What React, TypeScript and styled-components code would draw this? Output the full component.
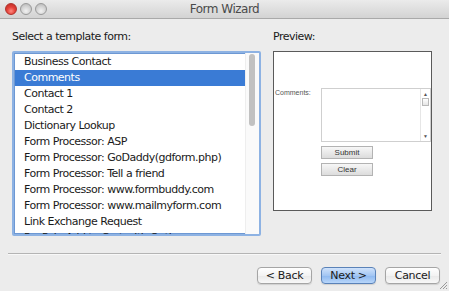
import React from "react";
import styled, { createGlobalStyle } from "styled-components";

const Global = createGlobalStyle`
  html, body { margin: 0; padding: 0; background: #ececec; }
  * { box-sizing: border-box; }
`;

const Window = styled.div`
  width: 449px;
  height: 291px;
  background: #ececec;
  display: flex;
  flex-direction: column;
  font-family: "DejaVu Sans", "Liberation Sans", sans-serif;
  color: #1a1a1a;
  position: relative;
  overflow: hidden;
`;

const TitleBar = styled.div`
  height: 19px;
  flex: none;
  display: flex;
  align-items: center;
  position: relative;
  background: linear-gradient(#ebebeb, #d3d3d3);
  border-bottom: 1px solid #a9a9a9;
  padding-left: 5px;
  gap: 3px;
`;

const Light = styled.div<{ $c: "red" | "gray" }>`
  width: 12px;
  height: 12px;
  border-radius: 50%;
  border: 1px solid ${(p) => (p.$c === "red" ? "#b0322c" : "#9a9a9a")};
  background: ${(p) =>
    p.$c === "red"
      ? "radial-gradient(circle at 50% 70%, #ff8a80 0%, #e5423a 45%, #b82a22 100%)"
      : "radial-gradient(circle at 50% 70%, #f2f2f2 0%, #d4d4d4 50%, #b2b2b2 100%)"};
`;

const Title = styled.div`
  position: absolute;
  left: 0;
  right: 0;
  top: 0;
  bottom: 0;
  display: flex;
  align-items: center;
  justify-content: center;
  font-size: 12px;
  letter-spacing: -0.5px;
  color: #4a4a4a;
  pointer-events: none;
`;

const Body = styled.div`
  display: flex;
  gap: 12px;
  padding: 11px 0 0 12px;
`;

const Column = styled.div<{ $w: number }>`
  width: ${(p) => p.$w}px;
  display: flex;
  flex-direction: column;
`;

const Label = styled.div`
  font-size: 11px;
  letter-spacing: -0.5px;
  line-height: 14px;
  height: 21px;
  color: #1a1a1a;
`;

const ListBox = styled.div`
  height: 185px;
  border: 2px solid #8db2e3;
  border-radius: 2px;
  display: flex;
  background: #fff;
  overflow: hidden;
  box-shadow: inset 0 0 0 1px #6d98d3;
`;

const Items = styled.div`
  flex: 1;
  padding: 1px 0 0 1px;
  display: flex;
  flex-direction: column;
  overflow: hidden;
`;

const Item = styled.div<{ $sel?: boolean }>`
  height: 16px;
  flex: none;
  padding-left: 9px;
  font-size: 11px;
  letter-spacing: -0.5px;
  line-height: 16px;
  white-space: nowrap;
  background: ${(p) => (p.$sel ? "#3a7bd5" : "transparent")};
  color: ${(p) => (p.$sel ? "#fff" : "#1a1a1a")};
`;

const ScrollTrack = styled.div`
  width: 14px;
  flex: none;
  padding: 1px 4px 0 3px;
  background: #fafafa;
  border-left: 1px solid #eeeeee;
`;

const Thumb = styled.div`
  height: 72px;
  border-radius: 4px;
  background: #c1c1c1;
`;

const PreviewBox = styled.div`
  height: 160px;
  border: 1px solid #5a5a5a;
  background: #fff;
  display: flex;
  padding: 36px 0 0 1px;
  font-family: "Liberation Sans", Arial, sans-serif;
`;

const FieldLabel = styled.div`
  width: 46px;
  font-size: 7px;
  color: #555;
  padding-top: 1px;
`;

const FieldCol = styled.div`
  display: flex;
  flex-direction: column;
  gap: 4px;
  width: 110px;
`;

const TextArea = styled.div`
  height: 54px;
  border: 1px solid #cfcfcf;
  display: flex;
  justify-content: flex-end;
`;

const MiniScroll = styled.div`
  width: 10px;
  border-left: 1px solid #e6e6e6;
  display: flex;
  flex-direction: column;
  align-items: center;
  padding: 2px 0;
  font-size: 5px;
  color: #555;
  gap: 1px;
`;

const MiniThumb = styled.div`
  width: 7px;
  height: 8px;
  border: 1px solid #b9b9b9;
  background: linear-gradient(#ffffff, #e5e5e5);
`;

const Spacer = styled.div`
  flex: 1;
`;

const FormButton = styled.div`
  width: 52px;
  height: 13px;
  border: 1px solid #b3b3b3;
  background: linear-gradient(#f7f7f7, #dcdcdc);
  font-size: 8px;
  color: #333;
  display: flex;
  align-items: center;
  justify-content: center;
`;

const Separator = styled.div`
  margin: 17px 8px 0 8px;
  height: 2px;
  border-top: 1px solid #b4b4b4;
  border-bottom: 1px solid #f8f8f8;
`;

const ButtonRow = styled.div`
  display: flex;
  justify-content: flex-end;
  gap: 9px;
  padding: 12px 9px 0 0;
`;

const Button = styled.div<{ $primary?: boolean }>`
  width: 55px;
  height: 17px;
  border-radius: 4px;
  border: 1px solid ${(p) => (p.$primary ? "#5a82b8" : "#a5a5a5")};
  background: ${(p) =>
    p.$primary
      ? "linear-gradient(#cfe2fb 0%, #a3c6f3 50%, #8db8f0 51%, #b8d6fa 100%)"
      : "linear-gradient(#ffffff 0%, #f3f3f3 50%, #e9e9e9 51%, #f8f8f8 100%)"};
  box-shadow: 0 1px 1px rgba(0, 0, 0, 0.12);
  font-size: 11px;
  letter-spacing: -0.3px;
  color: #1a1a1a;
  display: flex;
  align-items: center;
  justify-content: center;
`;

const Grip = styled.svg`
  position: absolute;
  right: 1px;
  bottom: 1px;
`;

const items = [
  "Business Contact",
  "Comments",
  "Contact 1",
  "Contact 2",
  "Dictionary Lookup",
  "Form Processor: ASP",
  "Form Processor: GoDaddy(gdform.php)",
  "Form Processor: Tell a friend",
  "Form Processor: www.formbuddy.com",
  "Form Processor: www.mailmyform.com",
  "Link Exchange Request",
  "PayPal - Add to Cart with Option",
];

export default function App() {
  return (
    <Window>
      <Global />
      <TitleBar>
        <Light $c="red" />
        <Light $c="gray" />
        <Light $c="gray" />
        <Title>Form Wizard</Title>
      </TitleBar>
      <Body>
        <Column $w={249}>
          <Label>Select a template form:</Label>
          <ListBox>
            <Items>
              {items.map((t, i) => (
                <Item key={t} $sel={i === 1}>
                  {t}
                </Item>
              ))}
            </Items>
            <ScrollTrack>
              <Thumb />
            </ScrollTrack>
          </ListBox>
        </Column>
        <Column $w={159}>
          <Label>Preview:</Label>
          <PreviewBox>
            <FieldLabel>Comments:</FieldLabel>
            <FieldCol>
              <TextArea>
                <MiniScroll>
                  <span>▲</span>
                  <MiniThumb />
                  <Spacer />
                  <span>▼</span>
                </MiniScroll>
              </TextArea>
              <FormButton>Submit</FormButton>
              <FormButton>Clear</FormButton>
            </FieldCol>
          </PreviewBox>
        </Column>
      </Body>
      <Separator />
      <ButtonRow>
        <Button>&lt; Back</Button>
        <Button $primary>Next &gt;</Button>
        <Button>Cancel</Button>
      </ButtonRow>
      <Grip width="10" height="10" viewBox="0 0 10 10">
        <path d="M9 2 L2 9 M9 5 L5 9 M9 8 L8 9" stroke="#9a9a9a" strokeWidth="1" />
      </Grip>
    </Window>
  );
}
